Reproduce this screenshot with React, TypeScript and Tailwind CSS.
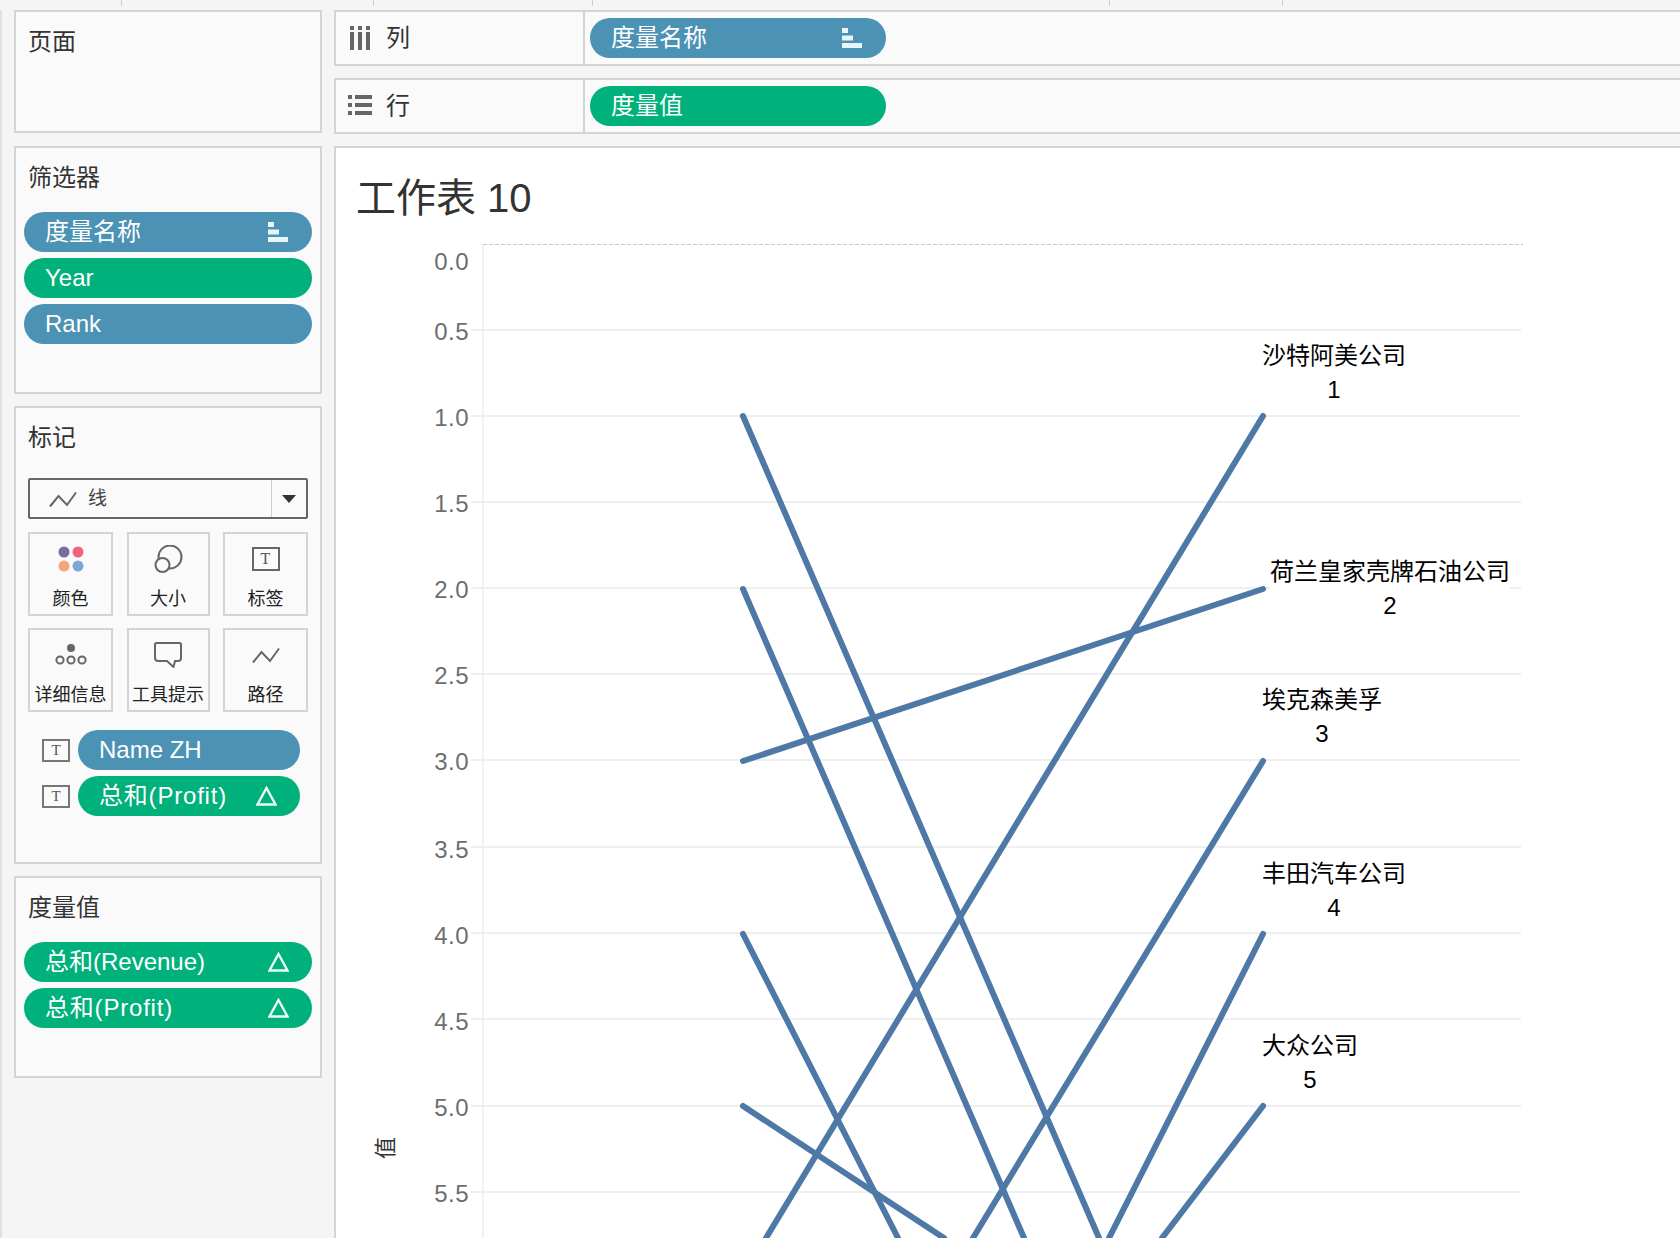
import type { ReactNode } from "react";

const CHART_X = 336;
const CHART_Y = 240;

const ticks = [
  { label: "0.0", text: 262, grid: 0 },
  { label: "0.5", text: 332, grid: 330 },
  { label: "1.0", text: 418, grid: 416 },
  { label: "1.5", text: 504, grid: 502 },
  { label: "2.0", text: 590, grid: 588 },
  { label: "2.5", text: 676, grid: 674 },
  { label: "3.0", text: 762, grid: 760 },
  { label: "3.5", text: 850, grid: 847 },
  { label: "4.0", text: 936, grid: 933 },
  { label: "4.5", text: 1022, grid: 1019 },
  { label: "5.0", text: 1108, grid: 1106 },
  { label: "5.5", text: 1194, grid: 1192 },
];

const lines = [
  [743, 416, 1099, 1238],
  [743, 589, 1024, 1238],
  [743, 934, 898, 1238],
  [743, 1106, 944, 1238],
  [743, 761, 1263, 589],
  [1263, 416, 766, 1238],
  [1263, 761, 973, 1238],
  [1263, 934, 1109, 1238],
  [1263, 1106, 1162, 1238],
];

const labels = [
  { name: "沙特阿美公司", rank: "1", x: 1262, y: 339, bg: false },
  { name: "荷兰皇家壳牌石油公司", rank: "2", x: 1270, y: 555, bg: true },
  { name: "埃克森美孚", rank: "3", x: 1262, y: 683, bg: false },
  { name: "丰田汽车公司", rank: "4", x: 1262, y: 857, bg: false },
  { name: "大众公司", rank: "5", x: 1262, y: 1029, bg: false },
];

const SortIcon = () => (
  <svg width="20" height="20" viewBox="0 0 20 20" fill="#e8f6fa">
    <rect x="0" y="0" width="6" height="5" />
    <rect x="0" y="7.5" width="11" height="5" />
    <rect x="0" y="15" width="20" height="5" />
  </svg>
);

const DeltaIcon = () => (
  <svg className="-mr-[1px]" width="21" height="20" viewBox="0 0 21 20" fill="none" stroke="#eafaf4" strokeWidth="2.4">
    <path d="M10.5 2 L19.5 18.5 H1.5 Z" />
  </svg>
);

const Pill = ({
  text,
  color,
  icon,
  className,
  textClass,
}: {
  text: string;
  color: "blue" | "green";
  icon?: ReactNode;
  className?: string;
  textClass?: string;
}) => (
  <div
    className={`flex h-10 items-center justify-between rounded-full pl-[21px] pr-[24px] text-[24px] text-white ${
      color === "blue" ? "bg-[#4b92b4]" : "bg-[#00b17b]"
    } ${className ?? ""}`}
  >
    <span className={`whitespace-nowrap ${textClass ?? ""}`}>{text}</span>
    {icon}
  </div>
);

const TBox = () => (
  <div className="flex h-[23px] w-[28px] shrink-0 items-center justify-center border-2 border-[#777] font-['Liberation_Serif',serif] text-[15px] leading-none text-[#555]">
    T
  </div>
);

const Tile = ({ label, width, icon }: { label: string; width: string; icon: ReactNode }) => (
  <div className={`flex h-[84px] flex-col items-center border-2 border-[#d4d4d4] pt-[7px] ${width}`}>
    <div className="flex h-[36px] items-center justify-center">{icon}</div>
    <span className="mt-[9px] whitespace-nowrap text-[18px] leading-[26px] text-[#222]">{label}</span>
  </div>
);

const LineGlyph = () => (
  <svg width="28" height="17" viewBox="0 0 28 17" fill="none" stroke="#666" strokeWidth="2">
    <path d="M1 15.5 L9.5 5 L18 14 L27 1.5" />
  </svg>
);

const App = () => {
  return (
    <div className="flex h-[1238px] w-[1680px] flex-col overflow-hidden bg-[#f5f5f5] font-['Liberation_Sans','Noto_Sans_CJK_SC',sans-serif] [font-variant-ligatures:none]">
      {/* top ruler ticks */}
      <div className="flex h-[10px] shrink-0 items-start">
        <div className="ml-[121px] h-[6px] w-[1px] bg-[#ccc]" />
        <div className="ml-[251px] h-[6px] w-[1px] bg-[#ccc]" />
        <div className="ml-[218px] h-[6px] w-[1px] bg-[#ccc]" />
        <div className="ml-[516px] h-[6px] w-[1px] bg-[#ccc]" />
        <div className="ml-[172px] h-[6px] w-[1px] bg-[#ccc]" />
      </div>

      <div className="flex min-h-0 flex-1 border-l-2 border-[#e0e0e0]">
        {/* left shelf */}
        <div className="ml-[12px] flex w-[308px] shrink-0 flex-col">
          <section className="h-[123px] border-2 border-[#d4d4d4] bg-[#fafafa] px-[12px] pt-[13px]">
            <h2 className="text-[24px] leading-[34px] text-[#333]">页面</h2>
          </section>

          <section className="mt-[13px] h-[248px] border-2 border-[#d4d4d4] bg-[#fafafa] px-[8px] pt-[13px]">
            <h2 className="pl-[4px] text-[24px] leading-[34px] text-[#333]">筛选器</h2>
            <div className="mt-[17px] flex flex-col gap-[6px]">
              <Pill text="度量名称" color="blue" icon={<SortIcon />} />
              <Pill text="Year" color="green" />
              <Pill text="Rank" color="blue" />
            </div>
          </section>

          <section className="mt-[12px] h-[458px] border-2 border-[#d4d4d4] bg-[#fafafa] pt-[13px]">
            <h2 className="pl-[12px] text-[24px] leading-[34px] text-[#333]">标记</h2>
            <div className="mx-[12px] mt-[23px] flex h-[41px] items-center rounded-[2px] border-2 border-[#666]">
              <div className="flex h-full w-[242px] items-center border-r border-[#ccc] pl-[19px] pt-[2px]">
                <LineGlyph />
                <span className="ml-[11px] text-[19px] text-[#444]">线</span>
              </div>
              <svg className="ml-[10px]" width="14" height="8" viewBox="0 0 14 8" fill="#333">
                <path d="M0 0 H14 L7 8 Z" />
              </svg>
            </div>
            <div className="mx-[12px] mt-[13px] grid w-[280px] grid-cols-[85px_83px_85px] justify-between gap-y-[12px]">
              <Tile
                label="颜色"
                width="w-[85px]"
                icon={
                  <svg width="26" height="26" viewBox="0 0 26 26">
                    <circle cx="6" cy="6" r="5.5" fill="#7b6a9e" />
                    <circle cx="20" cy="6" r="5.5" fill="#f0637a" />
                    <circle cx="6" cy="20" r="5.5" fill="#f2a77a" />
                    <circle cx="20" cy="20" r="5.5" fill="#7fa6d4" />
                  </svg>
                }
              />
              <Tile
                label="大小"
                width="w-[83px]"
                icon={
                  <svg width="30" height="28" viewBox="0 0 30 28" fill="none" stroke="#666" strokeWidth="2">
                    <circle cx="17" cy="12" r="11.5" />
                    <circle cx="9.5" cy="20" r="7" fill="#fafafa" />
                  </svg>
                }
              />
              <Tile
                label="标签"
                width="w-[85px]"
                icon={
                  <div className="flex h-[24px] w-[28px] items-center justify-center border-2 border-[#666] font-['Liberation_Serif',serif] text-[16px] leading-none text-[#555]">
                    T
                  </div>
                }
              />
              <Tile
                label="详细信息"
                width="w-[85px]"
                icon={
                  <svg width="32" height="24" viewBox="0 0 32 24" fill="none" stroke="#666" strokeWidth="2">
                    <circle cx="16" cy="5" r="4" fill="#666" stroke="none" />
                    <circle cx="5" cy="17" r="3.6" />
                    <circle cx="16" cy="17" r="3.6" />
                    <circle cx="27" cy="17" r="3.6" />
                  </svg>
                }
              />
              <Tile
                label="工具提示"
                width="w-[83px]"
                icon={
                  <svg width="28" height="26" viewBox="0 0 28 26" fill="none" stroke="#666" strokeWidth="2">
                    <path d="M2.5 1 H25.5 Q27 1 27 2.5 V16 Q27 19 24 19 H21 L19.5 25 L13 19 H4.5 Q1 19 1 15.5 V2.5 Q1 1 2.5 1 Z" />
                  </svg>
                }
              />
              <Tile label="路径" width="w-[85px]" icon={<LineGlyph />} />
            </div>
            <div className="ml-[26px] mr-[20px] mt-[18px] flex flex-col gap-[6px]">
              <div className="flex items-center gap-[8px]">
                <TBox />
                <Pill text="Name ZH" color="blue" className="flex-1" />
              </div>
              <div className="flex items-center gap-[8px]">
                <TBox />
                <Pill text="总和(Profit)" color="green" icon={<DeltaIcon />} className="flex-1" textClass="tracking-[0.8px]" />
              </div>
            </div>
          </section>

          <section className="mt-[12px] h-[202px] border-2 border-[#d4d4d4] bg-[#fafafa] px-[8px] pt-[13px]">
            <h2 className="pl-[4px] text-[24px] leading-[34px] text-[#333]">度量值</h2>
            <div className="mt-[17px] flex flex-col gap-[6px]">
              <Pill text="总和(Revenue)" color="green" icon={<DeltaIcon />} />
              <Pill text="总和(Profit)" color="green" icon={<DeltaIcon />} textClass="tracking-[0.8px]" />
            </div>
          </section>
        </div>

        {/* right side */}
        <div className="ml-[12px] flex min-w-0 flex-1 flex-col gap-[12px]">
          <div className="flex h-[56px] shrink-0 items-center border-y-2 border-l-2 border-[#d4d4d4] bg-[#fafafa]">
            <div className="flex h-full w-[249px] shrink-0 items-center border-r-2 border-[#d4d4d4] pl-[14px]">
              <svg width="20" height="24" viewBox="0 0 20 24" fill="#666">
                <rect x="0" y="0" width="4" height="4" />
                <rect x="0" y="6" width="4" height="18" />
                <rect x="8" y="0" width="4" height="4" />
                <rect x="8" y="6" width="4" height="18" />
                <rect x="16" y="0" width="4" height="4" />
                <rect x="16" y="6" width="4" height="18" />
              </svg>
              <span className="ml-[16px] text-[24px] text-[#333]">列</span>
            </div>
            <Pill text="度量名称" color="blue" icon={<SortIcon />} className="ml-[5px] w-[296px]" />
          </div>

          <div className="flex h-[56px] shrink-0 items-center border-y-2 border-l-2 border-[#d4d4d4] bg-[#fafafa]">
            <div className="flex h-full w-[249px] shrink-0 items-center border-r-2 border-[#d4d4d4] pl-[12px]">
              <svg className="-mt-[2px]" width="24" height="20" viewBox="0 0 24 20" fill="#666">
                <rect x="0" y="0" width="4" height="4" />
                <rect x="7" y="0" width="17" height="4" />
                <rect x="0" y="8" width="4" height="4" />
                <rect x="7" y="8" width="17" height="4" />
                <rect x="0" y="16" width="4" height="4" />
                <rect x="7" y="16" width="17" height="4" />
              </svg>
              <span className="ml-[14px] text-[24px] text-[#333]">行</span>
            </div>
            <Pill text="度量值" color="green" className="ml-[5px] w-[296px]" />
          </div>

          <div className="flex min-h-0 flex-1 flex-col border-l-2 border-t-2 border-[#d4d4d4] bg-white">
            <h1 className="h-[92px] shrink-0 pl-[20px] pt-[23px] text-[40px] font-normal leading-[54px] text-[#333]">工作表 10</h1>
            <div className="relative min-h-0 flex-1 overflow-hidden">
              <svg className="absolute left-0 top-0" width="1344" height="998">
                <line x1={483 - CHART_X} y1={4} x2={483 - CHART_X} y2={998} stroke="#f2f2f2" strokeWidth="2" />
                <line x1={483 - CHART_X} y1={4.5} x2={1523 - CHART_X} y2={4.5} stroke="#c8c8c8" strokeDasharray="4 2" />
                {ticks.filter((t) => t.grid > 0).map((t) => (
                  <line
                    key={t.label}
                    x1={471 - CHART_X}
                    y1={t.grid - CHART_Y}
                    x2={1521 - CHART_X}
                    y2={t.grid - CHART_Y}
                    stroke="#efefef"
                    strokeWidth="2"
                  />
                ))}
                {lines.map((l, i) => (
                  <line
                    key={i}
                    x1={l[0] - CHART_X}
                    y1={l[1] - CHART_Y}
                    x2={l[2] - CHART_X}
                    y2={l[3] - CHART_Y}
                    stroke="#4e79a7"
                    strokeWidth="6"
                    strokeLinecap="round"
                  />
                ))}
              </svg>

              {ticks.map((t) => (
                <span
                  key={t.label}
                  className="absolute w-[60px] -translate-y-1/2 text-right text-[24px] leading-[30px] tracking-[0.5px] text-[#6e6e6e]"
                  style={{ left: 409 - CHART_X, top: t.text - CHART_Y }}
                >
                  {t.label}
                </span>
              ))}

              <span
                className="absolute -translate-x-1/2 -translate-y-1/2 -rotate-90 text-[22px] leading-none text-[#333]"
                style={{ left: 386 - CHART_X, top: 1148 - CHART_Y }}
              >
                值
              </span>

              {labels.map((l) => (
                <div
                  key={l.rank}
                  className={`absolute whitespace-nowrap text-center text-[24px] leading-[34px] text-black ${l.bg ? "bg-white" : ""}`}
                  style={{ left: l.x - CHART_X, top: l.y - CHART_Y }}
                >
                  <div>{l.name}</div>
                  <div>{l.rank}</div>
                </div>
              ))}
            </div>
          </div>
        </div>
      </div>
    </div>
  );
};

export default App;
